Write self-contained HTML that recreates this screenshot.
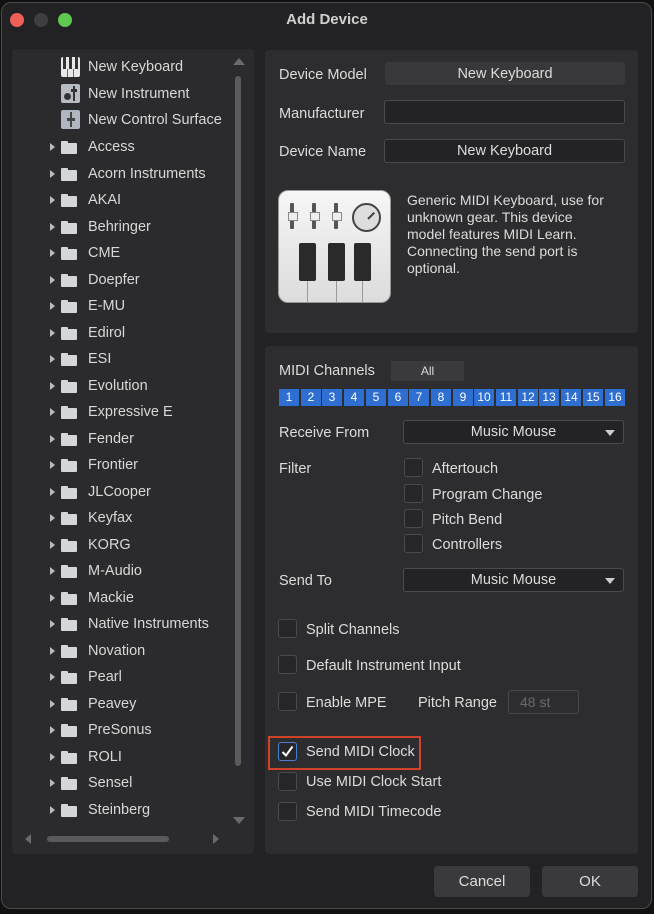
<!DOCTYPE html>
<html><head><meta charset="utf-8"><style>
*{box-sizing:border-box;margin:0;padding:0}
body{width:654px;height:914px;background:#111;font-family:"Liberation Sans",Arial,sans-serif;color:#dcdcdc;font-size:14px;position:relative;overflow:hidden}
.win{position:absolute;left:1px;top:2px;width:651px;height:907px;background:#222224;border:1px solid #4a4a4c;border-radius:10px}
.a{position:absolute}
.title{left:0;width:654px;top:11px;text-align:center;font-weight:bold;font-size:15px;color:#d0d0d0}
.dot{width:14px;height:14px;border-radius:50%;top:13px}
.panel{background:#2d2d2f;border-radius:4px}
.list{left:12px;top:49px;width:242px;height:805px;background:#2b2b2d}
.row{position:absolute;left:88px;font-size:14.5px;color:#d8d8d8;white-space:nowrap}
.tri{position:absolute;left:50px;width:0;height:0;border-top:4px solid transparent;border-bottom:4px solid transparent;border-left:5px solid #bbb}
.fold{position:absolute;left:61px;width:16px;height:11px;background:#d4d6d9;border-radius:1px}
.fold:before{content:"";position:absolute;left:0;top:-2px;width:7px;height:3px;background:#d4d6d9;border-radius:1px 1px 0 0}
.lbl{position:absolute;font-size:14.5px;color:#dcdcdc;white-space:nowrap}
.field{position:absolute;border:1px solid #4a4a4c;background:#232325;border-radius:3px;text-align:center;font-size:14.5px;line-height:22px}
.cb{position:absolute;width:19px;height:19px;border:1px solid #4a4a4c;border-radius:3px;background:#262628}
.ch{position:absolute;top:389px;width:20px;height:17px;background:#2e6fd1;color:#fff;font-size:12px;text-align:center;line-height:17px}
.dd{position:absolute;background:#232325;border:1px solid #4a4a4c;border-radius:3px;text-align:center;font-size:14.5px;line-height:22px}
.dd:after{content:"";position:absolute;right:8px;top:9px;border-left:5px solid transparent;border-right:5px solid transparent;border-top:6px solid #ccc}
.btn{position:absolute;top:866px;height:31px;background:#3a3a3c;border-radius:4px;text-align:center;line-height:31px;font-size:15px;color:#ddd}
.sl{position:absolute;top:12px;width:4px;height:26px;background:#555;border-radius:1px}
.sl:after{content:"";position:absolute;left:-2px;top:9px;width:8px;height:7px;background:#eee;border:1px solid #888}
</style></head><body>
<div class="win"></div>
<div class="a dot" style="left:10px;background:#ee5f58"></div>
<div class="a dot" style="left:34px;background:#3e3e40"></div>
<div class="a dot" style="left:58px;background:#5fc94f"></div>
<div class="a title">Add Device</div>

<div class="a panel list"></div>
<div class="a" style="left:233px;top:58px;border-left:6px solid transparent;border-right:6px solid transparent;border-bottom:7px solid #6a6a6c"></div>
<div class="a" style="left:235px;top:76px;width:6px;height:690px;background:#5a5a5c;border-radius:3px"></div>
<div class="a" style="left:233px;top:817px;border-left:6px solid transparent;border-right:6px solid transparent;border-top:7px solid #6a6a6c"></div>
<div class="a" style="left:25px;top:834px;border-top:5px solid transparent;border-bottom:5px solid transparent;border-right:6px solid #6a6a6c"></div>
<div class="a" style="left:47px;top:836px;width:122px;height:6px;background:#5a5a5c;border-radius:3px"></div>
<div class="a" style="left:213px;top:834px;border-top:5px solid transparent;border-bottom:5px solid transparent;border-left:6px solid #6a6a6c"></div>

<div class="a" style="left:61px;top:57px;width:19px;height:20px;background:#e8e8e8;border-radius:2px">
<div class="a" style="left:2px;top:0;width:3px;height:12px;background:#333"></div><div class="a" style="left:8px;top:0;width:3px;height:12px;background:#333"></div><div class="a" style="left:14px;top:0;width:3px;height:12px;background:#333"></div>
<div class="a" style="left:6px;top:12px;width:1px;height:8px;background:#666"></div><div class="a" style="left:12px;top:12px;width:1px;height:8px;background:#666"></div></div>
<div class="a" style="left:61px;top:84px;width:19px;height:19px;background:#b8bcc2;border-radius:2px"><div class="a" style="left:3px;top:9px;width:7px;height:7px;border-radius:50%;background:#333"></div><div class="a" style="left:12px;top:2px;width:2px;height:15px;background:#333"></div><div class="a" style="left:10px;top:5px;width:6px;height:3px;background:#333"></div></div>
<div class="a" style="left:61px;top:110px;width:19px;height:19px;background:#b0b6c0;border-radius:2px"><div class="a" style="left:9px;top:2px;width:2px;height:15px;background:#444"></div><div class="a" style="left:6px;top:8px;width:8px;height:3px;background:#444"></div></div>
<div class="row" style="top:59px">New Keyboard</div>
<div class="row" style="top:86px">New Instrument</div>
<div class="row" style="top:112px">New Control Surface</div>

<div id="rows"></div>
<script>
var n=["Access","Acorn Instruments","AKAI","Behringer","CME","Doepfer","E-MU","Edirol","ESI","Evolution","Expressive E","Fender","Frontier","JLCooper","Keyfax","KORG","M-Audio","Mackie","Native Instruments","Novation","Pearl","Peavey","PreSonus","ROLI","Sensel","Steinberg"];
var h="";n.forEach(function(s,i){var y=147+i*26.5;h+='<div class="tri" style="top:'+(y-4)+'px"></div><div class="fold" style="top:'+(y-4)+'px"></div><div class="row" style="top:'+(y-8)+'px">'+s+'</div>';});
document.getElementById("rows").innerHTML=h;
</script>

<div class="a panel" style="left:265px;top:50px;width:373px;height:283px"></div>
<div class="lbl" style="left:279px;top:67px">Device Model</div>
<div class="field" style="left:385px;top:62px;width:240px;height:23px;background:#38383a;border-color:#38383a">New Keyboard</div>
<div class="lbl" style="left:279px;top:106px">Manufacturer</div>
<div class="field" style="left:384px;top:100px;width:241px;height:24px"></div>
<div class="lbl" style="left:279px;top:144px">Device Name</div>
<div class="field" style="left:384px;top:139px;width:241px;height:24px">New Keyboard</div>
<div class="a" style="left:278px;top:190px;width:113px;height:113px;background:linear-gradient(#f6f6f6,#dcdcdc);border-radius:10px;border:1px solid #999">
 <div class="sl" style="left:11px"></div>
 <div class="sl" style="left:33px"></div>
 <div class="sl" style="left:55px"></div>
 <div class="a" style="left:73px;top:12px;width:29px;height:29px;border-radius:50%;background:#ddd;border:2px solid #444"><div class="a" style="left:13px;top:5px;width:2px;height:9px;background:#444;transform:rotate(45deg);transform-origin:bottom"></div></div>
 <div class="a" style="left:28px;top:88px;width:1px;height:24px;background:#999"></div>
 <div class="a" style="left:57px;top:88px;width:1px;height:24px;background:#999"></div>
 <div class="a" style="left:83px;top:88px;width:1px;height:24px;background:#999"></div>
 <div class="a" style="left:20px;top:52px;width:17px;height:38px;background:#2a2a2a;border-radius:2px"></div>
 <div class="a" style="left:49px;top:52px;width:17px;height:38px;background:#2a2a2a;border-radius:2px"></div>
 <div class="a" style="left:75px;top:52px;width:17px;height:38px;background:#2a2a2a;border-radius:2px"></div>
</div>
<div class="lbl" style="left:407px;top:192px;font-size:14px;line-height:17px">Generic MIDI Keyboard, use for<br>unknown gear. This device<br>model features MIDI Learn.<br>Connecting the send port is<br>optional.</div>

<div class="a panel" style="left:265px;top:346px;width:373px;height:508px"></div>
<div class="lbl" style="left:279px;top:363px">MIDI Channels</div>
<div class="a" style="left:391px;top:361px;width:73px;height:20px;background:#3a3a3c;text-align:center;font-size:12px;line-height:20px">All</div>
<div id="ch"></div>
<script>
var c="";for(var i=0;i<16;i++){c+='<div class="ch" style="left:'+Math.round(279+i*21.7)+'px">'+(i+1)+'</div>';}
document.getElementById("ch").innerHTML=c;
</script>
<div class="lbl" style="left:279px;top:425px">Receive From</div>
<div class="dd" style="left:403px;top:420px;width:221px;height:24px">Music Mouse</div>
<div class="lbl" style="left:279px;top:461px">Filter</div>
<div class="cb" style="left:404px;top:458px"></div><div class="lbl" style="left:432px;top:461px">Aftertouch</div>
<div class="cb" style="left:404px;top:484px"></div><div class="lbl" style="left:432px;top:487px">Program Change</div>
<div class="cb" style="left:404px;top:509px"></div><div class="lbl" style="left:432px;top:512px">Pitch Bend</div>
<div class="cb" style="left:404px;top:534px"></div><div class="lbl" style="left:432px;top:537px">Controllers</div>
<div class="lbl" style="left:279px;top:573px">Send To</div>
<div class="dd" style="left:403px;top:568px;width:221px;height:24px">Music Mouse</div>
<div class="cb" style="left:278px;top:619px"></div><div class="lbl" style="left:306px;top:622px">Split Channels</div>
<div class="cb" style="left:278px;top:655px"></div><div class="lbl" style="left:306px;top:658px">Default Instrument Input</div>
<div class="cb" style="left:278px;top:692px"></div><div class="lbl" style="left:306px;top:695px">Enable MPE</div>
<div class="lbl" style="left:418px;top:695px">Pitch Range</div>
<div class="a" style="left:508px;top:690px;width:71px;height:24px;border:1px solid #48484a;border-radius:3px;color:#6a6a6a;font-size:14px;line-height:22px;padding-left:11px">48 st</div>
<div class="a" style="left:268px;top:736px;width:153px;height:34px;border:2px solid #d0432a"></div>
<div class="cb" style="left:278px;top:742px;border-color:#4a7fd0"><svg width="17" height="17" style="position:absolute;left:0;top:0"><path d="M3.5 9 L7 12.5 L13.5 3.5" stroke="#fff" stroke-width="2" fill="none"/></svg></div>
<div class="lbl" style="left:306px;top:744px">Send MIDI Clock</div>
<div class="cb" style="left:278px;top:772px"></div><div class="lbl" style="left:306px;top:774px">Use MIDI Clock Start</div>
<div class="cb" style="left:278px;top:802px"></div><div class="lbl" style="left:306px;top:804px">Send MIDI Timecode</div>

<div class="btn" style="left:434px;width:96px">Cancel</div>
<div class="btn" style="left:542px;width:96px">OK</div>
</body></html>
